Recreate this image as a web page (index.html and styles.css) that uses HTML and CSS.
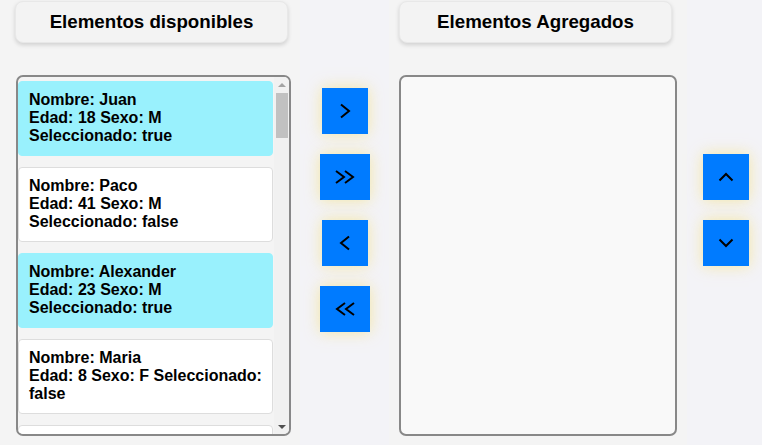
FILE: index.html
```html
<!DOCTYPE html>
<html lang="es">
<head>
  <meta charset="UTF-8">
  <title>Lista de elementos</title>
  <link rel="stylesheet" href="styles.css">
</head>
<body>

<div class="columna columna-izq">
  <div class="titulo">Elementos disponibles</div>
  <div class="lista lista-disponibles">
    <div class="elementos">
      <div class="elemento seleccionado">
        <span>Nombre: Juan</span>
        <span>Edad: 18 Sexo: M</span>
        <span>Seleccionado: true</span>
      </div>
      <div class="elemento">
        <span>Nombre: Paco</span>
        <span>Edad: 41 Sexo: M</span>
        <span>Seleccionado: false</span>
      </div>
      <div class="elemento seleccionado">
        <span>Nombre: Alexander</span>
        <span>Edad: 23 Sexo: M</span>
        <span>Seleccionado: true</span>
      </div>
      <div class="elemento">
        <span>Nombre: Maria</span>
        <span>Edad: 8 Sexo: F Seleccionado:</span>
        <span>false</span>
      </div>
      <div class="elemento"></div>
    </div>
    <div class="barra">
      <div class="flecha"><span class="tri-arriba"></span></div>
      <div class="pulgar"></div>
      <div class="relleno"></div>
      <div class="flecha"><span class="tri-abajo"></span></div>
    </div>
  </div>
</div>

<div class="botones">
  <button class="btn">
    <svg width="12" height="16" viewBox="0 0 12 16"><polyline points="2,1.5 10,8 2,14.5"/></svg>
  </button>
  <button class="btn btn-ancho">
    <svg width="22" height="16" viewBox="0 0 22 16"><polyline points="2,2 10,8 2,14"/><polyline points="11,2 19,8 11,14"/></svg>
  </button>
  <button class="btn">
    <svg width="12" height="16" viewBox="0 0 12 16"><polyline points="10,1.5 2,8 10,14.5"/></svg>
  </button>
  <button class="btn btn-ancho">
    <svg width="22" height="16" viewBox="0 0 22 16"><polyline points="11,2 3,8 11,14"/><polyline points="20,2 12,8 20,14"/></svg>
  </button>
</div>

<div class="columna columna-der">
  <div class="titulo">Elementos Agregados</div>
  <div class="lista lista-agregados"></div>
</div>

<div class="botones botones-orden">
  <button class="btn">
    <svg width="16" height="10" viewBox="0 0 16 10"><polyline points="1.5,8.5 8,2 14.5,8.5"/></svg>
  </button>
  <button class="btn">
    <svg width="16" height="10" viewBox="0 0 16 10"><polyline points="1.5,1.5 8,8 14.5,1.5"/></svg>
  </button>
</div>

</body>
</html>
```

FILE: styles.css
```css
body {
  margin: 0;
  display: flex;
  height: 445px;
  background-color: #f3f3f7;
  font-family: "Liberation Sans", Arial, sans-serif;
  color: #000;
}
.columna {
  background-color: #f4f4f4;
  padding-top: 1px;
  box-sizing: border-box;
}
.columna-izq {
  width: 300px;
  padding-left: 15px;
}
.columna-der {
  width: 298px;
  padding-left: 10px;
}
.titulo {
  width: 273px;
  height: 42px;
  box-sizing: border-box;
  line-height: 40px;
  text-align: center;
  font-size: 18.72px;
  font-weight: bold;
  background-color: #f3f3f3;
  border: 1px solid #e8e8e8;
  border-radius: 8px;
  box-shadow: 0 2px 4px rgba(0, 0, 0, 0.15);
}
.lista {
  margin-top: 32px;
  height: 361px;
  box-sizing: border-box;
  border: 2px solid #888;
  border-radius: 7px;
}
.lista-disponibles {
  width: 275px;
  margin-left: 1px;
  display: flex;
  overflow: hidden;
  background-color: #f4f4f4;
}
.elementos {
  flex: 1;
  padding-top: 4px;
  margin-right: 1px;
  overflow: hidden;
}
.barra {
  width: 15px;
  display: flex;
  flex-direction: column;
  background-color: #f1f1f1;
}
.flecha {
  height: 15px;
  display: flex;
  align-items: center;
  justify-content: center;
}
.tri-arriba {
  width: 0;
  height: 0;
  border-left: 4px solid transparent;
  border-right: 4px solid transparent;
  border-bottom: 4px solid #a3a3a3;
}
.tri-abajo {
  width: 0;
  height: 0;
  border-left: 4px solid transparent;
  border-right: 4px solid transparent;
  border-top: 4px solid #505050;
}
.pulgar {
  height: 45px;
  margin: 1px 1px 0 2px;
  background-color: #c1c1c1;
}
.relleno {
  flex: 1;
}
.lista-agregados {
  width: 278px;
  background-color: #f9f9f9;
}
.elemento {
  display: flex;
  flex-direction: column;
  height: 75px;
  box-sizing: border-box;
  padding: 9px 10px 0;
  margin-bottom: 11px;
  background-color: #fff;
  border: 1px solid #ddd;
  border-radius: 4px;
  font-size: 16px;
  font-weight: bold;
  line-height: 18px;
  white-space: nowrap;
}
.elemento.seleccionado {
  background-color: #99f1fd;
  border-color: #99f1fd;
}
.botones {
  width: 89px;
  display: flex;
  flex-direction: column;
  align-items: center;
  gap: 20px;
  padding-top: 88px;
}
.botones-orden {
  flex: 1;
  padding-top: 154px;
  align-items: flex-start;
  padding-left: 16px;
}
.btn {
  width: 46px;
  height: 46px;
  padding: 0;
  border: none;
  background-color: #007bff;
  box-shadow: 0 0 14px rgba(245, 225, 130, 0.7);
  display: flex;
  align-items: center;
  justify-content: center;
  cursor: pointer;
}
.btn-ancho {
  width: 50px;
}
.btn svg polyline {
  fill: none;
  stroke: #000;
  stroke-width: 2;
}
```
